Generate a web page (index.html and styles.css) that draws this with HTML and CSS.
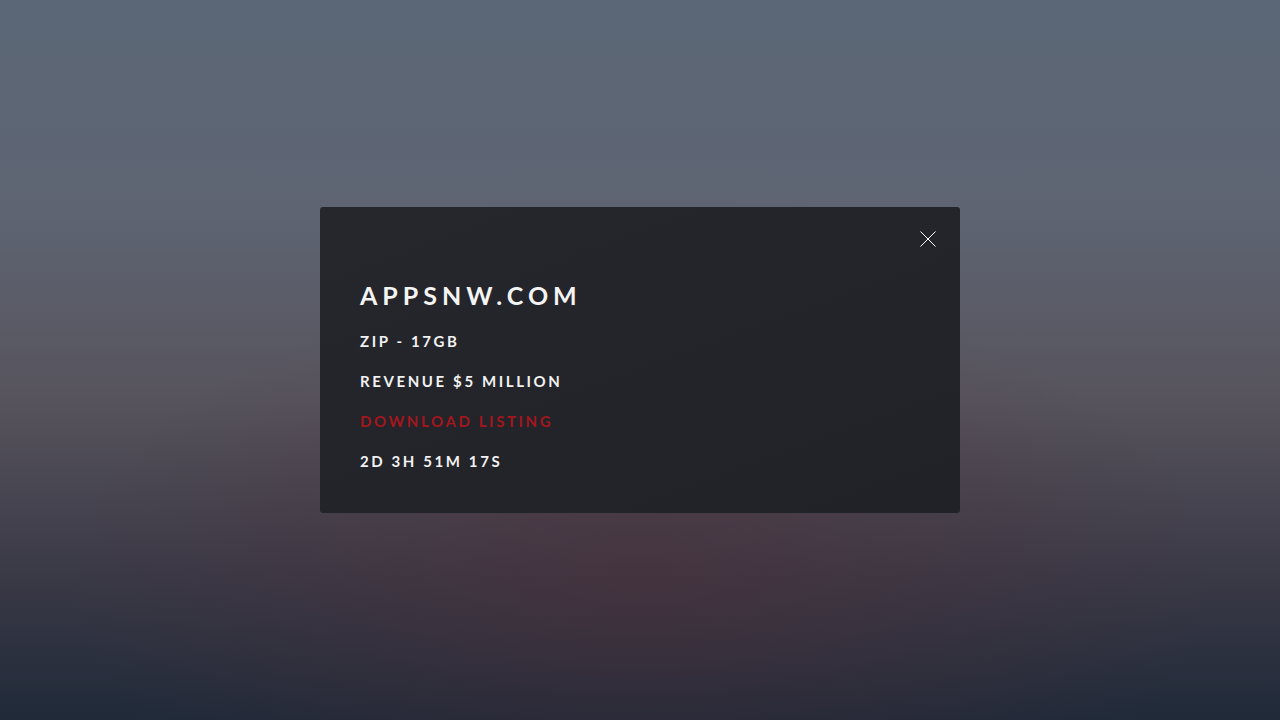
FILE: index.html
```html
<!DOCTYPE html>
<html lang="en">
<head>
    <meta charset="UTF-8">
    <meta name="viewport" content="width=device-width, initial-scale=1.0">
    <title>appsnw.com</title>
    <link rel="stylesheet" href="styles.css">
</head>
<body>
    <div class="overlay">
        <div class="modal">
            <div class="modal-top">
                <button class="close" aria-label="Close">
                    <svg width="16" height="16" viewBox="0 0 16 16">
                        <path d="M0.5 0.5 L15.5 15.5 M15.5 0.5 L0.5 15.5" stroke="#ffffff" stroke-width="1" fill="none"/>
                    </svg>
                </button>
            </div>
            <h1 class="title">appsnw.com</h1>
            <p class="line">Zip - 17GB</p>
            <p class="line">Revenue $5 Million</p>
            <a class="line link" href="#">Download Listing</a>
            <p class="line" id="countdown">2d 3h 51m 17s</p>
        </div>
    </div>
</body>
</html>
```

FILE: styles.css
```css
html, body {
    height: 100%;
}
body {
    margin: 0;
    font-family: Lato, "Open Sans", sans-serif;
    background:
        radial-gradient(ellipse 45% 40% at 50% 80%, rgba(80, 45, 55, 0.45), rgba(80, 45, 55, 0) 100%),
        linear-gradient(180deg, #5b6777 0%, #5e6472 30%, #57545d 55%, #3a3946 80%, #202a39 100%);
}
.overlay {
    height: 100%;
    display: flex;
    align-items: center;
    justify-content: center;
}
.modal {
    width: 640px;
    box-sizing: border-box;
    margin-top: -1px;
    padding: 24px 24px 36px 40px;
    background: linear-gradient(160deg, #26272c 0%, #212227 100%);
    border-radius: 3px;
}
.modal-top {
    display: flex;
    justify-content: flex-end;
}
.close {
    width: 16px;
    height: 16px;
    padding: 0;
    border: none;
    background: none;
    cursor: pointer;
    display: block;
}
.close svg {
    display: block;
}
.title {
    margin: 32px 0 0;
    font-size: 25px;
    line-height: 32px;
    font-weight: 700;
    letter-spacing: 5px;
    text-transform: uppercase;
    color: #f4f4f4;
}
.line {
    display: block;
    margin: 8px 0 0;
    font-size: 15px;
    line-height: 32px;
    font-weight: 700;
    letter-spacing: 2.6px;
    text-transform: uppercase;
    color: #f2f2f2;
    text-decoration: none;
}
.title + .line {
    margin-top: 14px;
}
.link {
    color: #a3161d;
}
```
